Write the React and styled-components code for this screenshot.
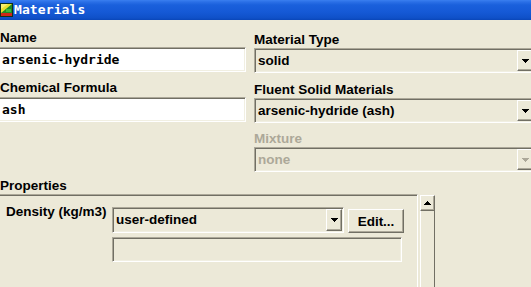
import styled, { createGlobalStyle, css } from 'styled-components';

const GlobalStyle = createGlobalStyle`
  html, body {
    margin: 0;
    padding: 0;
  }
  body {
    width: 531px;
    height: 287px;
    overflow: hidden;
    background: #ece9d8;
    font-family: 'Liberation Sans', Arial, sans-serif;
    color: #000;
  }
`;

const sunken = css`
  box-sizing: border-box;
  border: 1px solid;
  border-color: #aca899 #fff #fff #aca899;
  box-shadow: inset 1px 1px #716f64, inset -1px -1px #f1efe2;
`;

const raised = css`
  box-sizing: border-box;
  border: 1px solid;
  border-color: #fff #716f64 #716f64 #fff;
  box-shadow: inset -1px -1px #aca899;
  background: #ece9d8;
`;

const Window = styled.div`
  width: 531px;
  height: 287px;
  overflow: hidden;
  background: #ece9d8;
`;

const TitleBar = styled.div`
  height: 20px;
  display: flex;
  align-items: center;
  gap: 1px;
  background: linear-gradient(
    to bottom,
    #3a7ff0 0,
    #2a6fe6 2px,
    #1a60dc 5px,
    #1559d6 12px,
    #0f50c8 18px,
    #0a46b8 20px
  );
`;

const TitleText = styled.span`
  font-family: 'DejaVu Sans Mono', monospace;
  font-weight: bold;
  font-size: 13px;
  line-height: 20px;
  color: #fff;
  letter-spacing: 0.1px;
`;

const TopGrid = styled.div`
  display: grid;
  grid-template-columns: 249px 281px;
  column-gap: 8px;
  margin-left: -3px;
  align-items: start;
`;

const Column = styled.div`
  display: flex;
  flex-direction: column;
  padding-top: ${(p) => p.$top}px;
`;

const Group = styled.div`
  display: flex;
  flex-direction: column;
  margin-top: ${(p) => p.$gap || 0}px;
`;

const Label = styled.div`
  font-size: 13.5px;
  font-weight: bold;
  line-height: 16px;
  white-space: nowrap;
  padding-left: ${(p) => p.$indent || 0}px;
  margin-bottom: ${(p) => p.$after || 0}px;
  color: ${(p) => (p.$disabled ? '#aca899' : '#000')};
`;

const Entry = styled.div`
  ${sunken};
  height: 25px;
  background: #fff;
  padding-left: 4px;
  font-family: 'DejaVu Sans Mono', monospace;
  font-weight: bold;
  font-size: 13px;
  line-height: 23px;
  white-space: nowrap;
  overflow: hidden;
`;

const Select = styled.div`
  ${sunken};
  display: flex;
  width: ${(p) => p.$width}px;
  height: ${(p) => p.$height || 25}px;
  background: #ece9d8;
  flex: none;
`;

const SelectText = styled.div`
  flex: 1;
  padding-left: 3px;
  font-size: 13.5px;
  font-weight: bold;
  line-height: ${(p) => p.$line || 23}px;
  white-space: nowrap;
  overflow: hidden;
  color: ${(p) => (p.$disabled ? '#aca899' : '#000')};
`;

const ArrowButton = styled.div`
  ${raised};
  width: 16px;
  flex: none;
  margin: 1px 1px 1px 0;
  display: flex;
  align-items: center;
  justify-content: center;
`;

const PropTitle = styled(Label)`
  margin-top: 6px;
`;

const Pane = styled.div`
  display: flex;
  align-items: flex-start;
  gap: 2px;
  margin-left: -4px;
`;

const Frame = styled.div`
  box-sizing: border-box;
  width: 422px;
  height: 100px;
  border-top: 1px solid #aca899;
  border-left: 1px solid #aca899;
  border-right: 1px solid #fff;
  box-shadow: inset 1px 1px #716f64;
  padding: 12px 0 0 9px;
`;

const PropRow = styled.div`
  display: flex;
  align-items: flex-start;
`;

const PropName = styled.div`
  width: 106px;
  flex: none;
  margin-top: -3px;
  font-size: 13.5px;
  font-weight: bold;
  line-height: 16px;
  white-space: nowrap;
`;

const EditButton = styled.div`
  ${raised};
  width: 56px;
  height: 24px;
  margin: 2px 0 0 4px;
  display: flex;
  align-items: center;
  justify-content: center;
  font-size: 13.5px;
  font-weight: bold;
`;

const ValueRow = styled.div`
  margin-top: 4px;
  padding-left: 106px;
`;

const Field = styled.div`
  ${sunken};
  width: 290px;
  height: 25px;
  background: #ece9d8;
`;

const Scrollbar = styled.div`
  width: 15px;
  height: 100px;
  margin-top: 1px;
  display: flex;
  flex-direction: column;
`;

const ScrollButton = styled.div`
  ${raised};
  height: 16px;
  display: flex;
  align-items: center;
  justify-content: center;
`;

const Track = styled.div`
  flex: 1;
  border-left: 1px solid #fff;
  border-right: 1px solid #716f64;
`;

function FluentIcon() {
  return (
    <svg width="13" height="14" viewBox="0 0 13 14" style={{ flex: 'none' }}>
      <rect x="0.5" y="0.5" width="12" height="13" fill="#1e8a28" stroke="#10301a" />
      <polygon points="1,1 12,1 1,10" fill="#e8e030" />
      <polygon points="1,1 8,1 1,6" fill="#f8f070" />
      <rect x="1" y="10" width="11" height="3" fill="#d02818" />
      <rect x="6" y="6" width="5" height="3" fill="#3cb83c" />
    </svg>
  );
}

function Arrow({ up, color = '#000' }) {
  const rows = up ? [3, 2, 1, 0] : [0, 1, 2, 3];
  return (
    <svg width="7" height="4" viewBox="0 0 7 4" shapeRendering="crispEdges">
      {rows.map((inset, i) => (
        <rect key={i} x={inset} y={i} width={7 - inset * 2} height="1" fill={color} />
      ))}
    </svg>
  );
}

function Dropdown({ value, width, height, line, disabled }) {
  return (
    <Select $width={width} $height={height}>
      <SelectText $line={line} $disabled={disabled}>
        {value}
      </SelectText>
      <ArrowButton>
        <Arrow color={disabled ? '#aca899' : '#000'} />
      </ArrowButton>
    </Select>
  );
}

export default function App() {
  return (
    <>
      <GlobalStyle />
      <Window>
        <TitleBar>
          <FluentIcon />
          <TitleText>Materials</TitleText>
        </TitleBar>

        <TopGrid>
          <Column $top={10}>
            <Group>
              <Label $indent={3} $after={1}>Name</Label>
              <Entry>arsenic-hydride</Entry>
            </Group>
            <Group $gap={8}>
              <Label $indent={3} $after={1}>Chemical Formula</Label>
              <Entry>ash</Entry>
            </Group>
          </Column>

          <Column $top={12}>
            <Group>
              <Label>Material Type</Label>
              <Dropdown value="solid" width={281} />
            </Group>
            <Group $gap={9}>
              <Label>Fluent Solid Materials</Label>
              <Dropdown value="arsenic-hydride (ash)" width={281} />
            </Group>
            <Group $gap={8}>
              <Label $disabled>Mixture</Label>
              <Dropdown value="none" width={281} disabled />
            </Group>
          </Column>
        </TopGrid>

        <PropTitle>Properties</PropTitle>
        <Pane>
          <Frame>
            <PropRow>
              <PropName>Density (kg/m3)</PropName>
              <Dropdown value="user-defined" width={232} height={26} line={24} />
              <EditButton>Edit...</EditButton>
            </PropRow>
            <ValueRow>
              <Field />
            </ValueRow>
          </Frame>
          <Scrollbar>
            <ScrollButton>
              <Arrow up />
            </ScrollButton>
            <Track />
          </Scrollbar>
        </Pane>
      </Window>
    </>
  );
}
